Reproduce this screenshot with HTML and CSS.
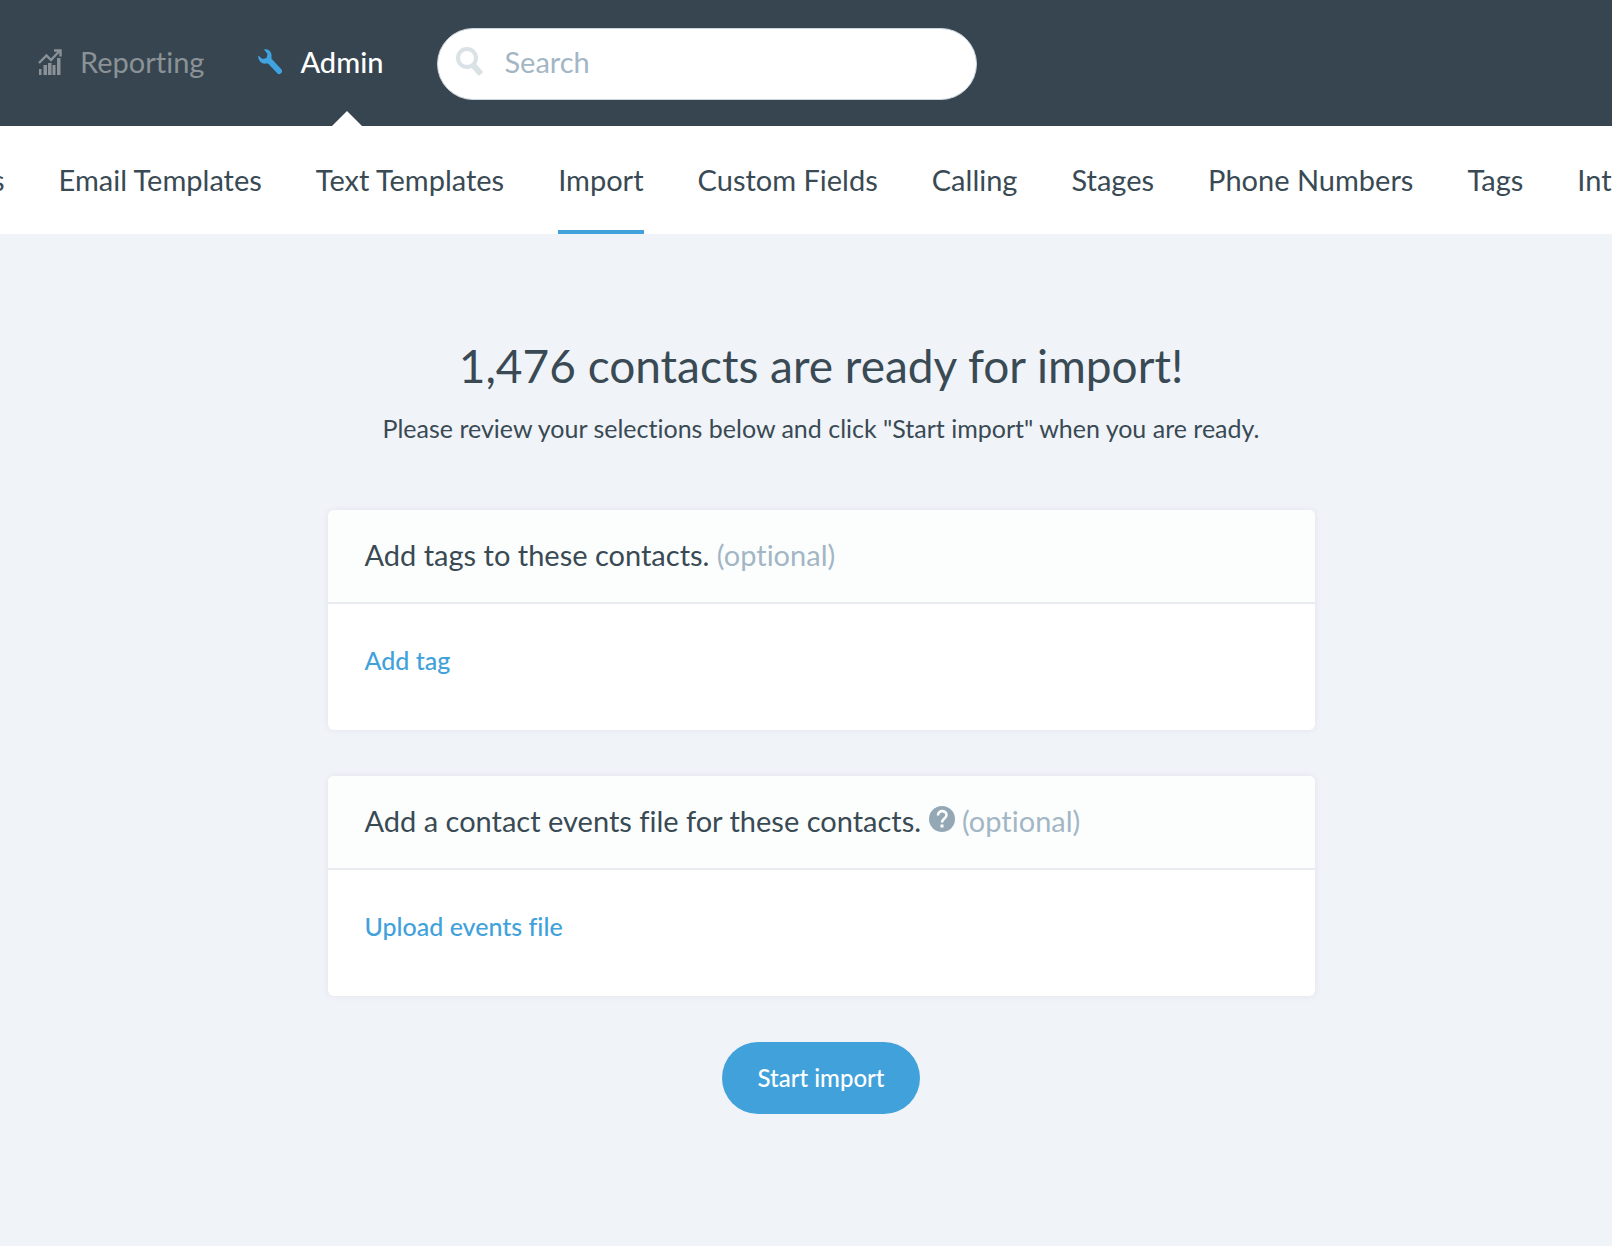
FILE: index.html
```html
<!DOCTYPE html>
<html lang="en">
<head>
<meta charset="utf-8">
<meta name="viewport" content="width=device-width, initial-scale=1">
<title>Import contacts</title>
<link rel="stylesheet" href="styles.css">
</head>
<body>
<header class="topbar">
  <nav class="primary" aria-label="Primary">
    <a class="primary-link" href="#reporting">
      <svg class="icon" viewBox="0 0 24 26" aria-hidden="true">
        <path d="M1 14 8.500 6.500 13 11 21 2.500M16 1.500h6.500v6" fill="none" stroke="currentColor" stroke-width="2.400"/>
        <path d="M1 20h2.500v6H1zM5.500 16h3.500v10H5.500zM10 14h3.500v12H10zM14.500 16h3v10h-3zM19 9h3.500v17H19z" fill="currentColor"/>
      </svg>
      <span>Reporting</span>
    </a>
    <a class="primary-link active" href="#admin" aria-current="true">
      <svg class="icon" viewBox="0 0 24 26" aria-hidden="true">
        <path d="M6 .5C10-.5 14 2.500 13.500 7.500c0 1.300-.2 2 .5 2.800L23.500 20.500c1 1.200.8 2.500-.2 3.600-1.100 1.200-2.700 1.500-3.800.3L10.500 15c-.6-.6-1.500-.6-2.700-.4C4 15.300-.3 11.500.3 6.500L4.500 10 8.500 9 9.500 5z" fill="#3fa4e0"/>
      </svg>
      <span>Admin</span>
    </a>
  </nav>
  <form class="search" role="search">
    <svg class="search-icon" viewBox="0 0 28 30" aria-hidden="true">
      <circle cx="11" cy="11" r="9" fill="none" stroke="#dae2e6" stroke-width="4"/>
      <path d="M17.500 18.500 25 27" fill="none" stroke="#dae2e6" stroke-width="6"/>
    </svg>
    <input class="search-input" type="search" placeholder="Search" aria-label="Search">
  </form>
</header>
<nav class="subnav" aria-label="Admin">
  <a class="tab" href="#more">s</a>
  <a class="tab" href="#email">Email Templates</a>
  <a class="tab" href="#text">Text Templates</a>
  <a class="tab current" href="#import" aria-current="page">Import</a>
  <a class="tab" href="#fields">Custom Fields</a>
  <a class="tab" href="#calling">Calling</a>
  <a class="tab" href="#stages">Stages</a>
  <a class="tab" href="#phones">Phone Numbers</a>
  <a class="tab" href="#tags">Tags</a>
  <a class="tab" href="#integrations">Integrations</a>
</nav>
<main class="page">
  <h1 class="title">1,476 contacts are ready for import!</h1>
  <p class="intro">Please review your selections below and click "Start import" when you are ready.</p>
  <section class="card">
    <h2 class="card-head">Add tags to these contacts. <span class="optional">(optional)</span></h2>
    <div class="card-body"><button class="link" type="button">Add tag</button></div>
  </section>
  <section class="card">
    <h2 class="card-head">Add a contact events file for these contacts.
      <svg class="help" viewBox="0 0 26 26" role="img" aria-label="Help">
        <circle cx="13" cy="13" r="13" fill="#93a7b5"/>
        <path d="M9 9.500C9 3.500 17.500 4 17.500 9c0 3.500-4.500 3.500-4.500 7.500" fill="none" stroke="#fcfefe" stroke-width="2.600"/>
        <path d="M11.500 18.500h3v3h-3z" fill="#fcfefe"/>
      </svg>
      <span class="optional">(optional)</span></h2>
    <div class="card-body"><button class="link" type="button">Upload events file</button></div>
  </section>
  <button class="start" type="button">Start import</button>
</main>
</body>
</html>
```

FILE: styles.css
```css
* {
  box-sizing: border-box;
}

body {
  margin: 0;
  min-height: 100vh;
  background: #f0f3f8;
  color: #394a54;
  font-family: Lato, "Liberation Sans", sans-serif;
  font-size: 29px;
  font-variant-ligatures: none;
  line-height: 36px;
}

button,
input {
  font: inherit;
}

a {
  color: inherit;
  text-decoration: none;
}

.topbar {
  display: flex;
  align-items: center;
  gap: 54px;
  height: 126px;
  padding: 2px 38px 0;
  background: #36454f;
}

.primary {
  display: flex;
  align-self: stretch;
  gap: 54px;
}

.primary-link {
  position: relative;
  display: flex;
  align-items: center;
  gap: 18px;
  padding-bottom: 4px;
  color: #8b9297;
}

.primary-link.active {
  color: #fff;
  font-weight: 500;
}

.primary-link.active::after {
  content: "";
  position: absolute;
  bottom: 0;
  right: 21px;
  border: 15px solid transparent;
  border-top: 0;
  border-bottom-color: #fff;
}

.icon {
  width: 24px;
  height: 26px;
}

.search {
  display: flex;
  align-items: center;
  gap: 20px;
  flex: 0 1 540px;
  height: 72px;
  padding: 0 18px 4px;
  border: 1px solid #c9d4db;
  border-radius: 36px;
  background: #fff;
}

.search-icon {
  flex: none;
  width: 28px;
  height: 30px;
}

.search-input {
  flex: 1;
  min-width: 0;
  padding: 0;
  border: 0;
  outline: 0;
  background: none;
  color: #394a54;
}

.search-input::placeholder {
  color: #a3b6c5;
}

.subnav {
  display: flex;
  gap: 54px;
  height: 108px;
  margin-left: -8px;
  overflow: hidden;
  background: #fff;
}

.tab {
  flex: none;
  padding-top: 36px;
  border-bottom: 4px solid transparent;
}

.tab.current {
  border-bottom-color: #41a2db;
}

.page {
  display: flex;
  flex-direction: column;
  align-items: center;
  padding: 102px 0 60px 30px;
}

.title {
  margin: 0;
  font-size: 46px;
  font-weight: 400;
  line-height: 60px;
}

.intro {
  margin: 14px 0 64px;
  font-size: 25px;
}

.card {
  width: 100%;
  max-width: 987px;
  margin-bottom: 46px;
  border-radius: 6px;
  background: #fff;
  box-shadow: 0 0 6px #e2e4ed;
}

.card-head {
  margin: 0;
  padding: 27px 37px 29px;
  border-bottom: 2px solid #e8ecf1;
  border-radius: 6px 6px 0 0;
  background: #fcfefe;
  font-size: 29px;
  font-weight: 400;
}

.optional {
  color: #a3b6c5;
}

.help {
  width: 26px;
  height: 26px;
}

.card-body {
  display: flex;
  padding: 38px 37px 52px;
}

.link {
  padding: 0;
  border: 0;
  background: none;
  color: #41a2db;
  font-size: 25px;
  font-weight: 500;
  cursor: pointer;
}

.start {
  height: 72px;
  padding: 0 35px;
  border: 0;
  border-radius: 36px;
  background: #41a2db;
  color: #fff;
  font-size: 24px;
  font-weight: 500;
  cursor: pointer;
}
```
